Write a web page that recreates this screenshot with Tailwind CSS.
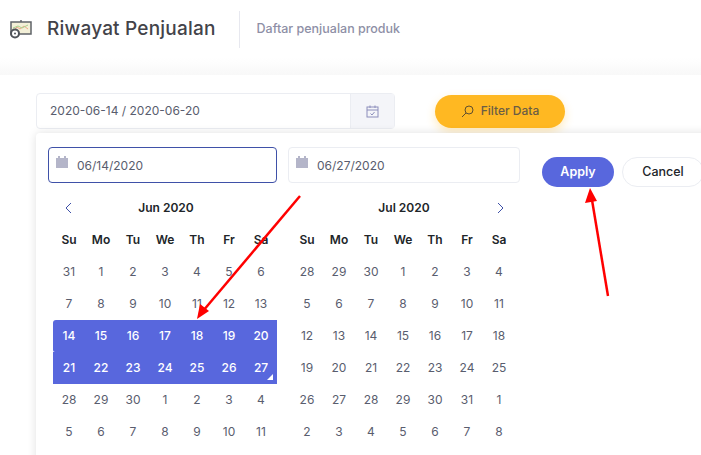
<!DOCTYPE html>
<html lang="en">
<head>
  <meta charset="UTF-8" />
  <title>Riwayat Penjualan</title>
  <script src="https://cdn.jsdelivr.net/npm/@tailwindcss/browser@4"></script>
</head>
<body class="relative h-[455px] w-[701px] overflow-hidden bg-white font-['Inter',sans-serif] text-[#595d6e]">
  <!-- page header -->
  <header class="flex h-[58px] items-center pl-[10px]">
    <svg class="h-[20px] w-[22px]" viewBox="0 0 22 20" fill="none">
      <rect x="1" y="3" width="20" height="12" fill="#f3f0d8" stroke="#5f6368" stroke-width="1.5"/>
      <path d="M3 12l4-4 3 2 4-3 4 3" stroke="#f0a58a" stroke-width="1"/>
      <path d="M3 9l5-2 4 2 6-3" stroke="#a8d08d" stroke-width="1"/>
      <path d="M11 1v2" stroke="#5f6368" stroke-width="1.5"/>
      <circle cx="5" cy="14.5" r="4" fill="#fff" stroke="#50545a" stroke-width="2"/>
      <circle cx="5" cy="14.5" r="1" fill="#50545a"/>
    </svg>
    <h1 class="ml-[15px] text-[19px] font-medium tracking-[0.2px] text-[#434349]">Riwayat Penjualan</h1>
    <div class="ml-[23px] h-[37px] w-px bg-[#e7e8ef]"></div>
    <p class="ml-[17px] text-[12.5px] font-medium text-[#8e8fa6]">Daftar penjualan produk</p>
  </header>
  <div class="h-[17px] bg-gradient-to-b from-white to-[#f8f8f8]"></div>

  <!-- filter row -->
  <div class="flex items-start pl-[36px] pt-[18px]">
    <div class="flex h-[36px] w-[359px] rounded-[4px] border border-[#ebedf2] bg-white">
      <div class="flex flex-1 items-center pl-[13px] text-[12px] text-[#595d6e]">2020-06-14 / 2020-06-20</div>
      <div class="flex w-[44px] items-center justify-center border-l border-[#ebedf2] bg-[#f4f5f9]">
        <svg class="h-[13px] w-[13px]" viewBox="0 0 13 13" fill="none" stroke="#8c8ebb" stroke-width="1">
          <rect x="1" y="2" width="11" height="10"/>
          <path d="M1 5h11M4 0.5v2.5M9 0.5v2.5M4.5 8.5l1.5 1.5 2.5-3"/>
        </svg>
      </div>
    </div>
    <button class="ml-[40px] mt-[2px] flex h-[33px] w-[130px] items-center justify-center gap-[7px] rounded-full bg-[#ffb822] pb-[1px] text-[12px] font-medium text-[#6b5d45] shadow-[0_4px_10px_rgba(255,184,34,0.3)]">
      <svg class="h-[13px] w-[13px]" viewBox="0 0 13 13" fill="none" stroke="#5f4f2f" stroke-width="1">
        <circle cx="8" cy="5" r="4"/>
        <path d="M5 8l-4 4"/>
      </svg>
      Filter Data
    </button>
  </div>

  <!-- date range picker -->
  <div class="absolute left-[36px] top-[133px] h-[340px] w-[700px] rounded-[4px] bg-white shadow-[0_0_10px_rgba(0,0,0,0.12)]">
    <div class="flex items-start pl-[12px] pt-[14px]">
      <div class="flex h-[36px] w-[229px] items-center rounded-[4px] border border-[#3f51a8] pl-[7px] text-[12px]">
        <svg class="mb-[7px] h-[13px] w-[12px]" viewBox="0 0 12 13" fill="#b4b5c9"><path d="M0 3h12v10H0zM2 1h2v2H2zM8 1h2v2H8z"/></svg>
        <span class="ml-[9px] mt-[1px]">06/14/2020</span>
      </div>
      <div class="ml-[11px] flex h-[36px] w-[232px] items-center rounded-[4px] border border-[#ebedf2] pl-[7px] text-[12px]">
        <svg class="mb-[7px] h-[13px] w-[12px]" viewBox="0 0 12 13" fill="#b4b5c9"><path d="M0 3h12v10H0zM2 1h2v2H2zM8 1h2v2H8z"/></svg>
        <span class="ml-[9px] mt-[1px]">06/27/2020</span>
      </div>
      <button class="ml-[22px] mt-[10px] h-[30px] w-[72px] rounded-full bg-[#5867dd] pt-[1px] text-[12.5px] font-semibold text-white">Apply</button>
      <button class="ml-[8px] mt-[10px] h-[30px] w-[82px] rounded-full border border-[#ebedf2] pt-[1px] text-[12.5px] font-medium text-[#212529]">Cancel</button>
    </div>

    <div class="flex pl-[17px] pt-[5px]">
      <div id="left" class="w-[224px]"></div>
      <div id="right" class="ml-[14px] w-[224px]"></div>
    </div>
  </div>

  <!-- annotation arrows -->
  <svg class="pointer-events-none absolute left-0 top-0" width="701" height="455" fill="none">
    <path d="M300 196L203 311" stroke="#f00" stroke-width="2.5"/>
    <path d="M197 319l3-15 9 7z" fill="#f00"/>
    <path d="M608 296L592 200" stroke="#f00" stroke-width="2.5"/>
    <path d="M590 188l-5 15 12-2z" fill="#f00"/>
  </svg>

  <script>
    const heads = ["Su", "Mo", "Tu", "We", "Th", "Fr", "Sa"];
    const juneDays = [31,1,2,3,4,5,6,7,8,9,10,11,12,13,14,15,16,17,18,19,20,21,22,23,24,25,26,27,28,29,30,1,2,3,4,5,6,7,8,9,10,11];
    const julyDays = [28,29,30,1,2,3,4,5,6,7,8,9,10,11,12,13,14,15,16,17,18,19,20,21,22,23,24,25,26,27,28,29,30,31,1,2,3,4,5,6,7,8];

    function calendar(title, days, prev, next, selFrom, selTo) {
      let html = `<div class="flex h-[32px] items-center justify-between pl-[11px] pr-[10px] text-[#212529]">
        <span class="w-[12px]">${prev}</span>
        <span class="ml-[1px] text-[12px] font-semibold">${title}</span>
        <span class="flex w-[12px] justify-end">${next}</span>
      </div><div class="grid grid-cols-7">`;
      heads.forEach(h => {
        html += `<div class="flex h-[32px] items-center justify-center text-[12px] font-semibold text-[#212529]">${h}</div>`;
      });
      days.forEach((d, i) => {
        const on = i >= selFrom && i <= selTo;
        const end = on && i === selTo;
        let corner = "";
        if (on && i === selFrom) corner = "rounded-tl-[3px] rounded-bl-[2px]";
        html += `<div class="relative flex h-[32px] items-center justify-center text-[12px] ${corner} ${on ? "bg-[#5867dd] font-medium text-white" : "text-[#595d6e]"}">${d}${end ? '<i class="absolute bottom-[4px] right-[4px] h-0 w-0 border-b-[6px] border-l-[6px] border-b-white border-l-transparent"></i>' : ""}</div>`;
      });
      return html + "</div>";
    }

    const chevL = '<svg width="8" height="12" viewBox="0 0 8 12" fill="none" stroke="#3f51a8" stroke-width="1"><path d="M7 1L2 6l5 5"/></svg>';
    const chevR = '<svg width="8" height="12" viewBox="0 0 8 12" fill="none" stroke="#3f51a8" stroke-width="1"><path d="M1 1l5 5-5 5"/></svg>';
    document.getElementById("left").innerHTML = calendar("Jun 2020", juneDays, chevL, "", 14, 27);
    document.getElementById("right").innerHTML = calendar("Jul 2020", julyDays, "", chevR, -1, -1);
  </script>
</body>
</html>
